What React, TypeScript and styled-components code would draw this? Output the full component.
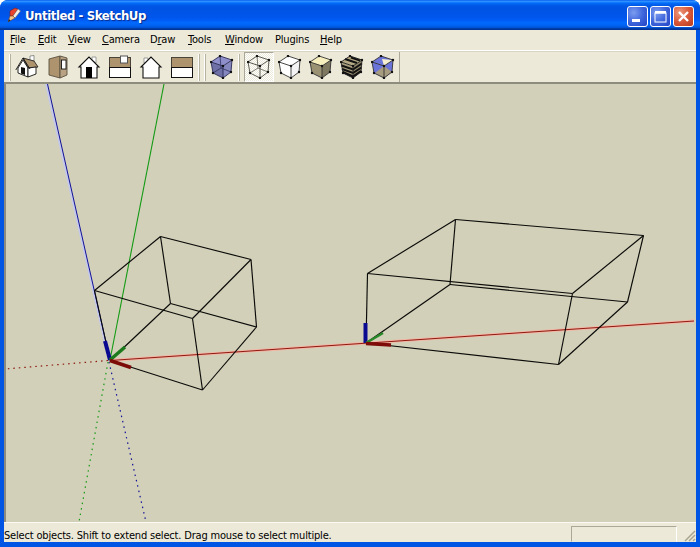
import React from "react";
import styled, { createGlobalStyle } from "styled-components";

const GlobalStyle = createGlobalStyle`
  html, body {
    margin: 0;
    padding: 0;
    background: #fff;
  }
`;

const uiFont = `"DejaVu Sans", "Liberation Sans", sans-serif`;

const Window = styled.div`
  width: 700px;
  height: 547px;
  display: flex;
  flex-direction: column;
  overflow: hidden;
  border-radius: 8px 8px 0 0;
  background: #0055e5;
  font-family: ${uiFont};
  font-stretch: condensed;
  font-size: 11px;
  letter-spacing: -0.18px;
  color: #000;
`;

const TitleBar = styled.div`
  height: 30px;
  flex: none;
  display: flex;
  align-items: center;
  padding: 0 6px 0 7px;
  box-sizing: border-box;
  background: linear-gradient(
    180deg,
    #0058ee 0%,
    #3593ff 4%,
    #288eff 6%,
    #127dff 8%,
    #036ffc 10%,
    #0262ee 14%,
    #0057e5 20%,
    #0054e3 24%,
    #0055eb 56%,
    #005bf5 66%,
    #026afe 76%,
    #0062ef 86%,
    #0052d6 92%,
    #0040ab 94%,
    #003092 100%
  );
`;

const AppIcon = styled.svg`
  width: 15px;
  height: 16px;
  flex: none;
`;

const TitleText = styled.span`
  margin-left: 3px;
  font-size: 13px;
  font-weight: 700;
  letter-spacing: -0.42px;
  color: #fff;
  text-shadow: 1px 1px 1px #0a2a8a;
  flex: 1;
`;

const WindowButtons = styled.div`
  display: flex;
  gap: 2px;
  margin-top: 2px;
`;

const WindowButton = styled.div<{ $close?: boolean }>`
  width: 21px;
  height: 21px;
  box-sizing: border-box;
  border: 1px solid #fff;
  border-radius: 3px;
  display: flex;
  align-items: center;
  justify-content: center;
  background: ${({ $close }) =>
    $close
      ? "radial-gradient(circle at 30% 30%, #ec9a7e 0%, #d9593a 50%, #b63a1c 100%)"
      : "radial-gradient(circle at 30% 30%, #7c9df0 0%, #3f66dc 50%, #2244c4 100%)"};
`;

const Client = styled.div`
  flex: 1;
  min-height: 0;
  margin: 0 4px 5px 4px;
  display: flex;
  flex-direction: column;
  background: #ece9d8;
`;

const MenuBar = styled.div`
  height: 21px;
  flex: none;
  display: flex;
  align-items: center;
  padding: 0 0 2px 6px;
  box-sizing: border-box;
  border-bottom: 1px solid #fff;
`;

const MenuItem = styled.span<{ $width: number }>`
  width: ${({ $width }) => $width}px;
  flex: none;
  white-space: nowrap;
  u {
    text-underline-offset: 1px;
  }
`;

const ToolbarRow = styled.div`
  height: 31px;
  flex: none;
  display: flex;
  align-items: stretch;
  box-sizing: border-box;
  border-top: 1px solid #d8d5c4;
  padding-left: 5px;
`;

const Band = styled.div<{ $end?: boolean }>`
  display: flex;
  align-items: stretch;
  margin-right: 3px;
  ${({ $end }) => $end && "border-right: 1px solid #aca899;"}
`;

const Grip = styled.div`
  width: 1px;
  margin: 2px 1px 1px 0;
  background: #b5b2a0;
  border-left: 1px solid #fff;
`;

const ToolButton = styled.div<{ $active?: boolean }>`
  width: 30px;
  margin-right: 1px;
  flex: none;
  display: flex;
  align-items: center;
  justify-content: center;
  box-sizing: border-box;
  ${({ $active }) =>
    $active &&
    `
    border: 1px solid;
    border-color: #aca899 #fff #fff #aca899;
    background: repeating-conic-gradient(#fff 0 25%, #ece9d8 0 50%) 0 0 / 2px 2px;
  `}
`;

const Icon = styled.svg`
  width: 24px;
  height: 24px;
`;

const Viewport = styled.div`
  flex: 1;
  min-height: 0;
  box-sizing: border-box;
  border-top: 2px solid #8e8c7c;
  border-left: 2px solid #8a8a80;
  background: #d2d0b9;
`;

const Canvas = styled.svg`
  display: block;
  width: 690px;
  height: 437px;
`;

const StatusBar = styled.div`
  height: 19px;
  flex: none;
  display: flex;
  align-items: stretch;
  border-top: 1px solid #fbfaf3;
  position: relative;
`;

const StatusText = styled.span`
  flex: 1;
  align-self: center;
  padding-top: 5px;
  white-space: nowrap;
`;

const StatusPanel = styled.div`
  width: 106px;
  margin: 3px 19px 0 0;
  box-sizing: border-box;
  border: 1px solid;
  border-color: #aca899 #fff transparent #aca899;
`;

const ResizeGrip = styled.svg`
  position: absolute;
  right: 0;
  bottom: 0;
  width: 13px;
  height: 13px;
`;

type Point = [number, number];

const box1 = {
  D: [94.5, 290.5],
  G: [160.5, 236.5],
  F: [251, 259.5],
  B: [256.5, 327],
  A: [202.5, 390],
  O: [110, 360.5],
  C: [170.5, 303.5],
  E: [192.5, 318.5],
} as Record<string, Point>;

const box2 = {
  D: [367.5, 273.5],
  G: [455.5, 219.5],
  F: [643.5, 235.5],
  B: [627.5, 302],
  A: [558.5, 364.5],
  O: [366, 343],
  C: [450, 284.5],
  E: [572.5, 293.5],
} as Record<string, Point>;

const edges = ["DG", "GF", "FB", "BA", "AO", "DE", "EA", "GC", "CB", "CO", "EF", "DO"];

const BoxEdges = ({ box }: { box: Record<string, Point> }) => (
  <g stroke="#0a0a08" strokeWidth={1.15} fill="none">
    {edges.map((e) => (
      <line key={e} x1={box[e[0]][0]} y1={box[e[0]][1]} x2={box[e[1]][0]} y2={box[e[1]][1]} />
    ))}
  </g>
);

const SceneDrawing = () => (
  <Canvas viewBox="6 84 690 437">
    {/* axes, solid part */}
    <line x1={110} y1={360.5} x2={694} y2={321} stroke="#f4b4a4" strokeWidth={2.8} />
    <line x1={110} y1={360.5} x2={694} y2={321} stroke="#8e1a10" strokeWidth={1} />
    <line x1={46} y1={84} x2={109} y2={360} stroke="#c4c8ea" strokeWidth={2} />
    <line x1={47.5} y1={84} x2={110} y2={360} stroke="#10109a" strokeWidth={1} />
    <line x1={164} y1={84} x2={110} y2={360} stroke="#149a14" strokeWidth={1.1} />
    {/* dotted part behind the origin */}
    <line x1={108} y1={360.5} x2={5} y2={369} stroke="#8e1a10" strokeWidth={1.2} strokeDasharray="1.5 4" />
    <line x1={109} y1={362} x2={146} y2={522} stroke="#10109a" strokeWidth={1.2} strokeDasharray="1.5 4" />
    <line x1={108} y1={362} x2={79} y2={522} stroke="#149a14" strokeWidth={1.2} strokeDasharray="1.5 4" />

    <BoxEdges box={box1} />
    <BoxEdges box={box2} />

    {/* short thick axis stubs at each origin */}
    <line x1={105} y1={341} x2={110} y2={360} stroke="#0a0a90" strokeWidth={4} />
    <line x1={110} y1={360} x2={125} y2={347} stroke="#1c7a1c" strokeWidth={3.5} />
    <line x1={110} y1={360.5} x2={131} y2={367.5} stroke="#7d0c08" strokeWidth={3.5} />
    <line x1={365.5} y1={323} x2={365.5} y2={343} stroke="#0a0a90" strokeWidth={4} />
    <line x1={366} y1={343} x2={383} y2={333} stroke="#2a8a2a" strokeWidth={2.5} />
    <line x1={366} y1={343.5} x2={391} y2={345} stroke="#7d0c08" strokeWidth={3.5} />
  </Canvas>
);

const Tan = "#ad946f";
const Ink = "#111";

const IsoHouseIcon = () => (
  <Icon viewBox="0 0 24 24">
    <polygon points="15,1 19,0.5 19,6 15,6" fill="#fff" stroke="#777" strokeWidth={0.8} />
    <polygon points="8,3 19,6 23,12 13,13" fill={Tan} stroke={Ink} strokeWidth={0.8} />
    <polygon points="3,13 8,5 13,13 13,22 3,18" fill="#fff" stroke={Ink} strokeWidth={0.9} />
    <polygon points="13,13 21,12 21,19 13,22" fill="#fff" stroke={Ink} strokeWidth={0.9} />
    <polygon points="6,12 10,13 10,20 6,18.5" fill="#111" />
    <polyline points="0.8,15 8,3 15,14" fill="none" stroke={Ink} strokeWidth={0.9} />
  </Icon>
);

const SideIcon = () => (
  <Icon viewBox="0 0 24 24">
    <polygon points="3,4 14,1 14,23 3,20" fill={Tan} stroke="#5a5040" strokeWidth={0.9} />
    <polygon points="14,1 21,3 21,20 14,23" fill="#b9a283" stroke="#5a5040" strokeWidth={0.9} />
    <rect x={15.5} y={5} width={4.5} height={9} fill="#fff" stroke={Ink} strokeWidth={0.9} />
  </Icon>
);

const FrontIcon = () => (
  <Icon viewBox="0 0 24 24">
    <polygon points="15,2 19,2 19,8 15,5" fill="#fff" stroke="#888" strokeWidth={0.8} />
    <polygon points="2,12 12,2 22,12 20,12 20,23 4,23 4,12" fill="#fff" stroke={Ink} strokeWidth={1.1} />
    <rect x={9} y={12} width={6} height={11} fill="#000" />
  </Icon>
);

const TopIcon = () => (
  <Icon viewBox="0 0 24 24">
    <rect x={1.5} y={2.5} width={21} height={10} fill={Tan} stroke="#4a4436" />
    <rect x={1.5} y={12.5} width={21} height={10} fill="#fff" stroke={Ink} />
    <rect x={12.5} y={1} width={7} height={7} fill="#fff" stroke="#555" />
  </Icon>
);

const BackIcon = () => (
  <Icon viewBox="0 0 24 24">
    <polygon points="5,3 9,3 9,7 5,8" fill="#fff" stroke="#888" strokeWidth={0.8} />
    <polygon points="2,12 12,2 22,12 20,12 20,23 4,23 4,12" fill="#fff" stroke={Ink} strokeWidth={1.1} />
  </Icon>
);

const LeftIcon = () => (
  <Icon viewBox="0 0 24 24">
    <rect x={1.5} y={2.5} width={21} height={10} fill={Tan} stroke="#4a4436" />
    <rect x={1.5} y={12.5} width={21} height={10} fill="#fff" stroke={Ink} />
  </Icon>
);

const cubeDots: Point[] = [
  [10, 1],
  [22, 5],
  [21, 17],
  [13, 23],
  [3, 18],
  [1, 7],
  [13, 11],
];

const CubeFrame = ({ stroke = "#222" }: { stroke?: string }) => (
  <g>
    <polygon points="10,1 22,5 21,17 13,23 3,18 1,7" fill="none" stroke={stroke} strokeWidth={0.9} />
    <polyline points="1,7 13,11 22,5" fill="none" stroke={stroke} strokeWidth={0.9} />
    <line x1={13} y1={11} x2={13} y2={23} stroke={stroke} strokeWidth={0.9} />
    {cubeDots.map(([x, y]) => (
      <circle key={`${x}-${y}`} cx={x} cy={y} r={1.2} fill="#111" />
    ))}
  </g>
);

const CubeFaces = ({ top, left, right }: { top: string; left: string; right: string }) => (
  <g>
    <polygon points="10,1 22,5 13,11 1,7" fill={top} />
    <polygon points="1,7 13,11 13,23 3,18" fill={left} />
    <polygon points="22,5 13,11 13,23 21,17" fill={right} />
  </g>
);

const BackEdges = ({ stroke }: { stroke: string }) => (
  <g stroke={stroke} strokeWidth={0.8} fill="none">
    <line x1={10} y1={1} x2={11} y2={13} />
    <line x1={3} y1={18} x2={11} y2={13} />
    <line x1={21} y1={17} x2={11} y2={13} />
  </g>
);

const XrayIcon = () => (
  <Icon viewBox="0 0 24 24">
    <CubeFaces top="#8e8fca" left="#6e70a6" right="#8587bf" />
    <BackEdges stroke="#30305e" />
    <CubeFrame stroke="#2b2b55" />
  </Icon>
);

const WireframeIcon = () => (
  <Icon viewBox="0 0 24 24">
    <BackEdges stroke="#5a5a50" />
    <CubeFrame stroke="#4a4a42" />
  </Icon>
);

const HiddenLineIcon = () => (
  <Icon viewBox="0 0 24 24">
    <CubeFaces top="#fff" left="#fff" right="#f4f4f4" />
    <CubeFrame stroke="#333" />
  </Icon>
);

const ShadedIcon = () => (
  <Icon viewBox="0 0 24 24">
    <CubeFaces top="#f6eebd" left="#9a9272" right="#7f7860" />
    <CubeFrame stroke="#333" />
  </Icon>
);

const TexturedIcon = () => (
  <Icon viewBox="0 0 24 24">
    <CubeFaces top="#b5a985" left="#a89c7c" right="#8e8468" />
    <g stroke="#111" strokeWidth={2} fill="none">
      <polyline points="5,4 17,8" />
      <polyline points="11,2.5 20,5.5" />
      <polyline points="1.5,10.5 13,14.5 21.8,8.5" />
      <polyline points="2,14 13,18 21.4,12.5" />
      <polyline points="2.8,17 13,21.5 21,16" />
    </g>
    <CubeFrame stroke="#222" />
  </Icon>
);

const MonochromeIcon = () => (
  <Icon viewBox="0 0 24 24">
    <CubeFaces top="#6b74d8" left="#6b74d8" right="#6b74d8" />
    <polygon points="13,11 22,5 11,4" fill="#f4efd0" />
    <polygon points="13,11 4,18 13,23 21,17" fill="#a79c80" />
    <CubeFrame stroke="#333" />
  </Icon>
);

const LogoIcon = () => (
  <AppIcon viewBox="0 0 15 16">
    <polygon points="3,4 8,1 11,2 6,9 3,9" fill="#e8432c" stroke="#7a1a10" strokeWidth={0.5} />
    <polygon points="6,9 11,2 13.5,4 8,11" fill="#f4f0e6" stroke="#8a6a50" strokeWidth={0.5} />
    <polygon points="1,15 3,9 6,9 8,11" fill="#f2c48a" stroke="#6a3a20" strokeWidth={0.5} />
    <polygon points="1,15 2,12 3.5,13.5" fill="#222" />
  </AppIcon>
);

const menus: { key: string; node: React.ReactNode; width: number }[] = [
  { key: "file", node: <><u>F</u>ile</>, width: 28 },
  { key: "edit", node: <><u>E</u>dit</>, width: 30 },
  { key: "view", node: <><u>V</u>iew</>, width: 34 },
  { key: "camera", node: <><u>C</u>amera</>, width: 48 },
  { key: "draw", node: <>D<u>r</u>aw</>, width: 38 },
  { key: "tools", node: <><u>T</u>ools</>, width: 37 },
  { key: "window", node: <><u>W</u>indow</>, width: 50 },
  { key: "plugins", node: "Plugins", width: 45 },
  { key: "help", node: <><u>H</u>elp</>, width: 34 },
];

const App: React.FC = () => (
  <>
    <GlobalStyle />
    <Window>
      <TitleBar>
        <LogoIcon />
        <TitleText>Untitled - SketchUp</TitleText>
        <WindowButtons>
          <WindowButton>
            <svg width="13" height="13" viewBox="0 0 13 13">
              <rect x="1" y="9" width="8" height="3" fill="#fff" />
            </svg>
          </WindowButton>
          <WindowButton>
            <svg width="13" height="13" viewBox="0 0 13 13">
              <rect x="1" y="3" width="11" height="9" fill="none" stroke="#fff" />
              <rect x="1" y="1" width="11" height="2.5" fill="#fff" />
            </svg>
          </WindowButton>
          <WindowButton $close>
            <svg width="13" height="13" viewBox="0 0 13 13">
              <path d="M2 2 L11 11 M11 2 L2 11" stroke="#fff" strokeWidth="2.4" />
            </svg>
          </WindowButton>
        </WindowButtons>
      </TitleBar>
      <Client>
        <MenuBar>
          {menus.map((m) => (
            <MenuItem key={m.key} $width={m.width}>
              {m.node}
            </MenuItem>
          ))}
        </MenuBar>
        <ToolbarRow>
          <Band>
            <Grip />
            <ToolButton><IsoHouseIcon /></ToolButton>
            <ToolButton><SideIcon /></ToolButton>
            <ToolButton><FrontIcon /></ToolButton>
            <ToolButton><TopIcon /></ToolButton>
            <ToolButton><BackIcon /></ToolButton>
            <ToolButton><LeftIcon /></ToolButton>
            <Grip />
          </Band>
          <Band>
            <Grip />
            <ToolButton><XrayIcon /></ToolButton>
            <Grip />
          </Band>
          <Band $end>
            <ToolButton $active><WireframeIcon /></ToolButton>
            <ToolButton><HiddenLineIcon /></ToolButton>
            <ToolButton><ShadedIcon /></ToolButton>
            <ToolButton><TexturedIcon /></ToolButton>
            <ToolButton><MonochromeIcon /></ToolButton>
          </Band>
        </ToolbarRow>
        <Viewport>
          <SceneDrawing />
        </Viewport>
        <StatusBar>
          <StatusText>Select objects. Shift to extend select. Drag mouse to select multiple.</StatusText>
          <StatusPanel />
          <ResizeGrip viewBox="0 0 13 13">
            <path d="M12 2 L2 12 M12 6 L6 12 M12 10 L10 12" stroke="#a9a590" strokeWidth="1.5" />
          </ResizeGrip>
        </StatusBar>
      </Client>
    </Window>
  </>
);

export default App;
